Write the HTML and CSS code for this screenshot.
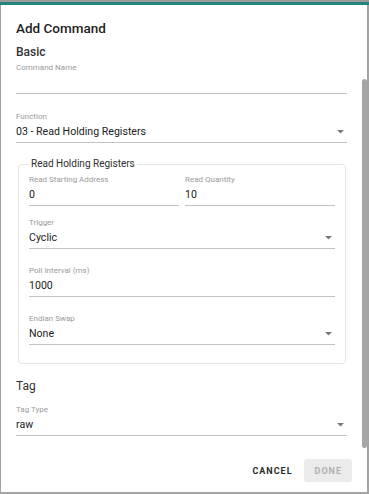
FILE: index.html
```html
<!DOCTYPE html>
<html lang="en">
<head>
    <meta charset="UTF-8">
    <meta name="viewport" content="width=device-width, initial-scale=1.0">
    <title>Add Command</title>
    <link rel="stylesheet" href="styles.css">
</head>
<body>
    <!-- page behind the modal, only a sliver shows -->
    <div class="page-peek">
        <div class="page-title">Access from Devices</div>
    </div>
    <div class="page-tabline"></div>

    <div class="dialog">
        <h2 class="dialog-title">Add Command</h2>

        <h3 class="section-title">Basic</h3>
        <div class="field field-first">
            <div class="field-label">Command Name</div>
            <div class="field-value"></div>
        </div>
        <div class="field field-gap">
            <div class="field-label">Function</div>
            <div class="field-value select">
                <span>03 - Read Holding Registers</span>
                <svg class="caret" width="7" height="4" viewBox="0 0 7 4"><polygon points="0,0 7,0 3.5,3.5" fill="#7a7a7a"/></svg>
            </div>
        </div>

        <fieldset class="group">
            <legend>Read Holding Registers</legend>
            <div class="field-row">
                <div class="field">
                    <div class="field-label">Read Starting Address</div>
                    <div class="field-value">0</div>
                </div>
                <div class="field">
                    <div class="field-label">Read Quantity</div>
                    <div class="field-value">10</div>
                </div>
            </div>
            <div class="field field-tight">
                <div class="field-label">Trigger</div>
                <div class="field-value select">
                    <span>Cyclic</span>
                    <svg class="caret" width="7" height="4" viewBox="0 0 7 4"><polygon points="0,0 7,0 3.5,3.5" fill="#7a7a7a"/></svg>
                </div>
            </div>
            <div class="field field-mid">
                <div class="field-label">Poll Interval (ms)</div>
                <div class="field-value">1000</div>
            </div>
            <div class="field field-mid">
                <div class="field-label">Endian Swap</div>
                <div class="field-value select">
                    <span>None</span>
                    <svg class="caret" width="7" height="4" viewBox="0 0 7 4"><polygon points="0,0 7,0 3.5,3.5" fill="#7a7a7a"/></svg>
                </div>
            </div>
        </fieldset>

        <h3 class="section-title section-tag">Tag</h3>
        <div class="field field-tagtype">
            <div class="field-label">Tag Type</div>
            <div class="field-value select">
                <span>raw</span>
                <svg class="caret" width="7" height="4" viewBox="0 0 7 4"><polygon points="0,0 7,0 3.5,3.5" fill="#7a7a7a"/></svg>
            </div>
        </div>

        <div class="dialog-actions">
            <button class="btn btn-text">CANCEL</button>
            <button class="btn btn-disabled" disabled>DONE</button>
        </div>

        <div class="scroll-thumb"></div>
    </div>
</body>
</html>
```

FILE: styles.css
```css
body, html {
    margin: 0;
    padding: 0;
    height: 100%;
    overflow: hidden;
    font-family: 'Roboto', 'Liberation Sans', sans-serif;
    background-color: #8f8f8f;
    color: #222;
}

body {
    display: flex;
    flex-direction: column;
}

.page-peek {
    height: 2px;
    overflow: hidden;
    background-color: #9a9a9a;
}

.page-title {
    margin-top: -20px;
    padding-left: 16px;
    font-size: 20px;
    line-height: 22px;
    font-weight: 500;
    color: #1c1c1c;
}

.page-tabline {
    height: 3px;
    background-color: #22867d;
}

/* dialog */
.dialog {
    position: relative;
    flex: 1;
    background-color: #fff;
    border-left: 1px solid #a3a3a3;
    border-right: 2px solid #a3a3a3;
    border-bottom: 2px solid #a3a3a3;
    padding: 13px 20px 0 15px;
}

.dialog-title {
    margin: 0;
    font-size: 13.5px;
    line-height: 20px;
    font-weight: 500;
    color: #1e1e1e;
}

.section-title {
    margin: 6px 0 0;
    font-size: 12px;
    line-height: 16px;
    font-weight: 500;
    color: #333;
}

.section-tag {
    margin-top: 14px;
    font-weight: 400;
}

.field-label {
    font-size: 8px;
    line-height: 10px;
    color: #9a9a9a;
}

.field-value {
    height: 20px;
    font-size: 10.6px;
    line-height: 20px;
    color: #222;
    border-bottom: 1px solid #c3c3c3;
}

.field-value.select {
    display: flex;
    justify-content: space-between;
    align-items: center;
}

.caret {
    margin-right: 3px;
    margin-top: -1px;
}

.field-first {
    margin-top: 3px;
}

.field-gap {
    margin-top: 18px;
}

.field-tight {
    margin-top: 12px;
}

.field-mid {
    margin-top: 17px;
}

.field-tagtype {
    margin-top: 11px;
}

/* Read Holding Registers group */
.group {
    margin: 15px 1px 0 2px;
    padding: 5px 10px 18px;
    border: 1px solid #e6e6e6;
    border-radius: 4px;
    min-width: 0;
}

.group legend {
    padding: 0 2px;
    font-size: 10px;
    line-height: 12px;
    color: #2e2e2e;
}

.field-row {
    display: grid;
    grid-template-columns: 1fr 1fr;
    gap: 6px;
}

/* actions */
.dialog-actions {
    display: flex;
    justify-content: flex-end;
    gap: 6px;
    margin: 23px -5px 0 0;
}

.btn {
    height: 23px;
    padding: 0 10px;
    border: none;
    border-radius: 3px;
    background: none;
    font-family: 'Roboto', 'Liberation Sans', sans-serif;
    font-size: 9px;
    font-weight: 700;
    letter-spacing: 1px;
}

.btn-text {
    color: #2b2b2b;
    padding: 0 5px;
}

.btn-disabled {
    background-color: #ebebeb;
    color: #b0b0b0;
    padding: 0 10px 0 11px;
}

.scroll-thumb {
    position: absolute;
    top: 74px;
    right: 0;
    width: 5px;
    height: 369px;
    border-radius: 3px;
    background-color: #a6a6a6;
}
```
